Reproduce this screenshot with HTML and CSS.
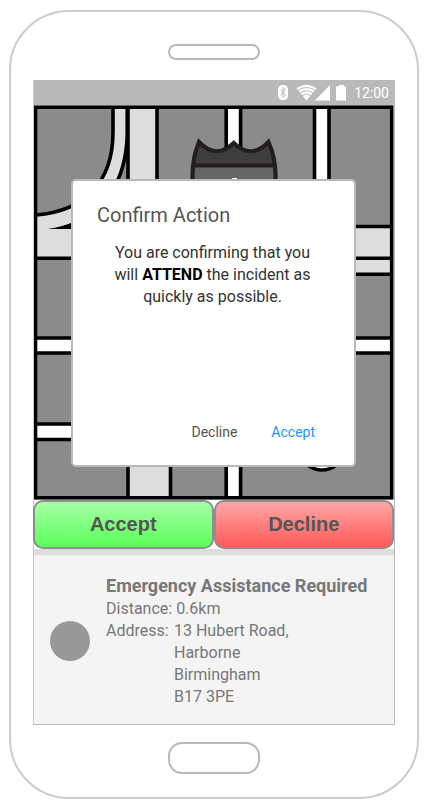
FILE: index.html
```html
<!DOCTYPE html>
<html lang="en">
<head>
<meta charset="utf-8">
<meta name="viewport" content="width=device-width, initial-scale=1">
<title>Confirm Action</title>
<link rel="stylesheet" href="styles.css">
</head>
<body>
<div class="phone">
  <div class="speaker"></div>
  <main class="screen">
    <header class="status">
      <svg class="status-icons" viewBox="0 0 70 18" aria-hidden="true">
        <rect x="1" y="1" width="10" height="15" rx="4.5" fill="#fff"/>
        <path d="M3.500 5.500l5 5.500L6 13.500V3.500L8.500 6l-5 5.500" fill="none" stroke="#b9b9b9" stroke-width="1"/>
        <path d="M19.500 4.500Q29.500-3 39.500 4.500L29.500 16.500z" fill="#fff"/>
        <path d="M21 6.500q8.500-6 17 0M23 9q6.500-4.500 13 0M25 11.500q4.500-3 9 0" fill="none" stroke="#b9b9b9" stroke-width="1"/>
        <path d="M38 16.500L53 1v15.500z" fill="#fff"/>
        <path d="M59 2.500h3V1h5v1.500h2v14H59z" fill="#fff"/>
      </svg>
      <time class="clock">12:00</time>
    </header>
    <div class="stage">
      <svg class="map" viewBox="34 105 360 395" role="img" aria-label="Map">
        <rect x="34" y="105" width="360" height="395" fill="#fff"/>
        <rect x="35.500" y="107" width="356" height="391" fill="#8b8b8b"/>
        <g fill="#ddd">
          <path d="M113 107V135Q111 207 36 215V258H128V107z"/>
          <path d="M128 107H157V228H391V274H170V498H128z"/>
        </g>
        <path d="M127 145Q120 205 76 222V229H128z" fill="#8b8b8b"/>
        <g fill="#fff">
          <path d="M226 107h15v391h-15zM315 107h14v120h-14zM36 338h92v15H36zM36 424h92v15H36zM172 338h220v15H172z"/>
          <ellipse cx="322" cy="455" rx="19" ry="15"/>
        </g>
        <g fill="none" stroke="#000" stroke-width="3.600">
          <path d="M113 107V132C113 182 85 211 36 215"/>
          <path d="M127.200 107V135C126 183 102 213 75 223"/>
          <path d="M128 107V498M157 107V227M170.500 260V498"/>
          <path d="M226.200 107V498M240.600 107V498M314.500 107V227M329 107V227"/>
          <path d="M72 227.300H128M36 258.200H128M157 226.500H391M157 258.200H393M157 274.300H393"/>
          <path d="M36 338H393M36 353H393M36 424H128M36 439.500H128"/>
          <ellipse cx="322" cy="455" rx="19" ry="15"/>
          <rect x="35.500" y="107.200" width="356.200" height="390.600"/>
        </g>
        <path d="M48 229Q62 227 76 221V229z" fill="#000"/>
        <path d="M199 142Q193 156 192.500 175V200H275.500V175Q275 156 268.500 142Q251 160 233.700 143Q216 160 199 142z" fill="#666"/>
        <path d="M199 142Q194 154 193 166H275Q274 154 268.500 142Q251 160 233.700 143Q216 160 199 142z" fill="#3e3e3e"/>
        <path d="M199 142Q192.500 158 192.500 175V200H275.500V175Q275.500 158 268.500 142Q251 160 233.700 143Q216 160 199 142zM192 165.500H276" fill="none" stroke="#231f20" stroke-width="4.200" stroke-miterlimit="8"/>
        <path d="M232 178h5v4h-5z" fill="#fff"/>
      </svg>
      <section class="dialog" role="dialog" aria-labelledby="dialog-title">
        <h1 class="dialog-title" id="dialog-title">Confirm Action</h1>
        <p class="dialog-text">You are confirming that you will <strong>ATTEND</strong> the incident as quickly as possible.</p>
        <div class="dialog-actions">
          <button class="text-button" type="button">Decline</button>
          <button class="text-button primary" type="button">Accept</button>
        </div>
      </section>
    </div>
    <div class="choices">
      <button class="choice accept" type="button">Accept</button>
      <button class="choice decline" type="button">Decline</button>
    </div>
    <section class="incident">
      <span class="marker"></span>
      <div class="details">
        <h2 class="incident-title">Emergency Assistance Required</h2>
        <p>Distance: 0.6km</p>
        <div class="address">
          <span>Address:</span>
          <address>13 Hubert Road,<br>Harborne<br>Birmingham<br>B17 3PE</address>
        </div>
      </div>
    </section>
  </main>
  <div class="home"></div>
</div>
</body>
</html>
```

FILE: styles.css
```css
* {
  box-sizing: border-box;
}

body {
  margin: 0;
  padding: 10px 9px 7px;
  background: #fff;
  font-family: Roboto, "Liberation Sans", sans-serif;
}

h1, h2, p {
  margin: 0;
}

button {
  margin: 0;
  padding: 0;
  cursor: pointer;
}

.phone {
  display: flex;
  flex-direction: column;
  align-items: center;
  padding: 32px 22px 23px;
  border: 2px solid #ccc;
  border-radius: 60px;
}

.speaker {
  width: 92px;
  height: 16px;
  margin-bottom: 20px;
  border: 2px solid #b9b9b9;
  border-radius: 8px;
}

.screen {
  width: 100%;
  border: 1px solid #b9b9b9;
  border-left-color: #ccc;
}

.status {
  display: flex;
  align-items: center;
  justify-content: flex-end;
  gap: 7px;
  height: 24px;
  padding-right: 5px;
  background: #b9b9b9;
}

.status-icons {
  width: 70px;
  height: 18px;
}

.clock {
  color: #fff;
  font-size: 14px;
  line-height: 24px;
}

.stage {
  display: grid;
}

.map {
  grid-area: 1 / 1;
  display: block;
  width: 100%;
}

.dialog {
  grid-area: 1 / 1;
  display: flex;
  flex-direction: column;
  align-self: start;
  margin: 74px 38px 0 37px;
  min-height: 288px;
  padding: 20px 24px;
  background: #fff;
  border: 2px solid #b9b9b9;
  border-radius: 5px;
}

.dialog-title {
  color: #555;
  font-size: 20px;
  font-weight: 400;
  line-height: 28px;
}

.dialog-text {
  margin-top: 13px;
  padding: 0 14px 0 12px;
  color: #333;
  font-size: 16px;
  line-height: 22px;
  text-align: center;
}

.dialog-text strong {
  color: #000;
}

.dialog-actions {
  display: flex;
  justify-content: flex-end;
  gap: 34px;
  margin-top: auto;
  padding: 0 15px 1px 0;
}

.text-button {
  background: none;
  border: 0;
  color: #555;
  font-family: inherit;
  font-size: 14px;
  line-height: 24px;
}

.text-button.primary {
  color: #2196f3;
}

.choices {
  display: grid;
  grid-template-columns: 1fr 1fr;
  margin-left: -1px;
}

.choice {
  height: 49px;
  border: 2px solid #8e8e8e;
  border-radius: 10px;
  color: #555;
  font-family: "Liberation Sans", sans-serif;
  font-size: 20px;
  font-weight: 700;
}

.accept {
  background: linear-gradient(#a6ffa6, #59ff59);
}

.decline {
  background: linear-gradient(#ffa6a6, #ff5959);
}

.incident {
  display: flex;
  align-items: center;
  gap: 16px;
  padding: 19px 16px 16px;
  background: #f4f4f4;
  border-top: 6px solid #ddd;
}

.marker {
  flex: none;
  width: 40px;
  height: 40px;
  background: #999;
  border-radius: 50%;
}

.details {
  color: #777;
  font-size: 16px;
  line-height: 22px;
}

.incident-title {
  font-size: 18px;
  font-weight: 700;
  line-height: 24px;
}

.address {
  display: flex;
}

.address span {
  flex: none;
  width: 68px;
}

.address address {
  font-style: normal;
}

.home {
  width: 92px;
  height: 32px;
  margin-top: 17px;
  border: 2px solid #b9b9b9;
  border-radius: 14px;
}
```
